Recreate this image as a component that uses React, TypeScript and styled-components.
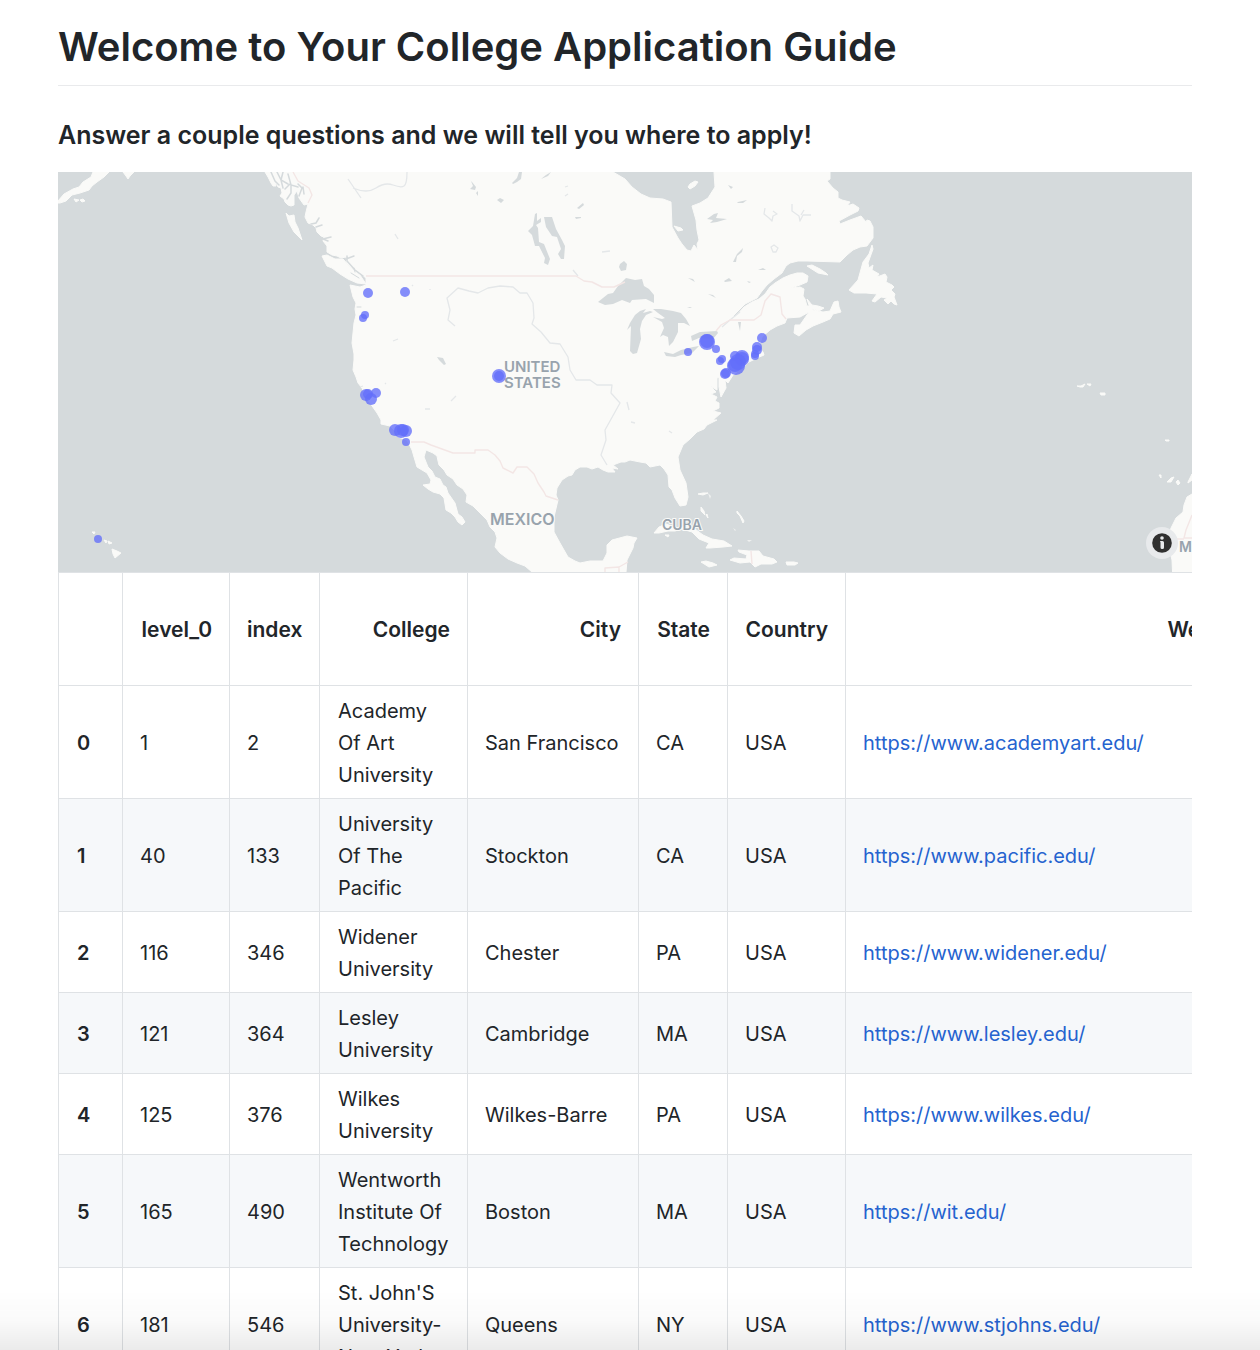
import React from "react";
import styled, { createGlobalStyle } from "styled-components";

const GlobalStyle = createGlobalStyle`
  *, *::before, *::after { box-sizing: border-box; }
  body {
    margin: 0;
    background: #fff;
    color: #212529;
    font-family: Inter, "Liberation Sans", sans-serif;
  }
`;

const Page = styled.div`
  height: 100vh;
  overflow-y: auto;
  scrollbar-width: none;
`;

const Content = styled.main`
  padding: 16px 68px 48px 58px;
`;

const Title = styled.h1`
  margin: 0;
  padding-bottom: 8px;
  border-bottom: 1px solid #e9eaec;
  font-size: 40px;
  font-weight: 600;
  line-height: 61px;
`;

const Subtitle = styled.h3`
  margin: 32px 0 20px;
  font-size: 25px;
  font-weight: 600;
  line-height: 34px;
`;

const MapFrame = styled.section`
  position: relative;
  height: 400px;
  overflow: hidden;
  background: #d5dadc;
`;

const MapDrawing = styled.svg`
  display: block;
  width: 100%;
  height: 100%;
`;

const InfoButton = styled.button`
  position: absolute;
  right: 14px;
  bottom: 13px;
  display: grid;
  place-items: center;
  width: 32px;
  height: 32px;
  padding: 0;
  border: 0;
  border-radius: 50%;
  background: #e8eaec;
`;

const TableScroll = styled.div`
  overflow-x: auto;
  scrollbar-width: none;
`;

const Table = styled.table`
  table-layout: fixed;
  width: 1209px;
  border-collapse: collapse;
  font-size: 20px;
  line-height: 32px;
`;

const Column = styled.col<{ $width: number }>`
  width: ${(p) => p.$width}px;
`;

const Row = styled.tr<{ $shaded?: boolean }>`
  background: ${(p) => (p.$shaded ? "#f6f8fa" : "#fff")};
`;

const HeadCell = styled.th`
  height: 113px;
  padding: 9px 17px 7px;
  border: 1px solid #dfe2e5;
  font-size: 21px;
  font-weight: 600;
  text-align: right;
  white-space: nowrap;
`;

const IndexCell = styled.th`
  padding: 9px 18px 7px;
  border: 1px solid #dfe2e5;
  font-weight: 600;
  text-align: left;
`;

const Cell = styled.td<{ $nowrap?: boolean }>`
  padding: 9px 0 7px 17px;
  border: 1px solid #dfe2e5;
  white-space: ${(p) => (p.$nowrap ? "nowrap" : "normal")};
`;

const CollegeCell = styled(Cell)`
  padding: 9px 12px 7px 18px;
`;

const SiteLink = styled.a`
  color: #2563cf;
  text-decoration: none;
`;

const BottomShade = styled.div`
  position: fixed;
  inset: auto 0 0 0;
  height: 60px;
  pointer-events: none;
  background: linear-gradient(rgba(0, 0, 0, 0), rgba(0, 0, 0, 0.02) 50%, rgba(0, 0, 0, 0.08));
`;

const land = "#fafaf8";
const water = "#d5dadc";

const MAINLAND =
  "M265 172L268 177L271 183L273 186L276 186L275 180L278 187L281 188L282 193L280 196L284 199L285 202L288 205L291 206L294 205L294 195L297 191L299 198L304 205L308 204L306 212L305 217L308 223L313 225L316 228L317 232L321 236L324 237L323 241L327 246L327 252L332 255L337 256L341 258L346 257L347 263L351 267L356 271L362 275L366 278L366 285L360 287L350 285L351 289L353 297L356 303L355 309L356 315L354 323L353 333L352 343L354 354L354 360L353 370L356 377L358 383L362 388L365 396L370 403L377 413L381 420L381 424L390 426L395 431L398 437L407 440L412 450L414 457L417 467L422 470L427 473L431 480L430 484L423 485L428 489L433 492L440 494L444 498L446 510L451 513L455 517L458 522L462 525L465 522L462 517L458 514L455 503L448 493L446 487L443 485L440 479L435 477L432 471L428 467L424 457L426 450L433 453L437 456L438 461L439 465L444 470L447 475L453 479L457 485L463 489L467 495L466 502L473 506L477 510L482 515L487 520L490 527L495 532L497 538L495 547L500 553L508 559L517 563L525 566L532 572L626 572L627 560L633 548L634 543L637 538L627 536L612 540L607 545L607 553L603 561L590 561L580 563L575 561L568 557L560 543L554 532L554 517L558 500L556 495L557 488L562 480L568 476L572 475L575 470L580 467L587 467L592 469L598 467L603 470L608 472L615 472L612 468L618 469L613 465L621 462L625 462L630 460L640 462L646 463L650 467L655 466L660 465L664 469L668 475L669 487L672 490L675 498L680 506L686 505L688 497L686 483L680 470L678 457L683 445L690 439L697 432L704 429L707 425L717 420L713 420L721 413L713 411L719 408L719 403L715 401L717 397L711 394L716 392L710 386L717 390L717 378L719 377L719 387L721 397L726 388L725 380L728 383L733 375L742 368L749 362L757 358L764 355L763 352L759 347L762 337L770 330L777 326L785 323L787 318L800 317L809 312L800 325L795 325L794 333L799 336L806 330L813 326L823 322L830 319L833 314L841 312L839 307L838 301L834 302L830 311L823 312L813 310L812 306L807 306L805 299L803 296L804 289L800 287L791 288L800 285L807 282L808 276L803 273L797 273L790 275L783 278L775 283L770 287L765 294L759 299L752 302L744 307L735 317L733 316L745 304L757 298L762 291L767 285L774 279L782 273L786 266L790 263L798 261L807 261L840 262L847 255L853 250L860 247L867 246L873 238L873 227L870 221L867 220L866 222L861 216L850 220L840 224L839 221L850 215L858 211L859 208L853 204L847 206L850 202L842 200L838 198L838 192L833 188L827 181L830 179L830 172L714 172L715 187L708 198L700 203L692 206L696 220L697 230L699 240L697 244L698 250L694 245L691 251L687 250L682 244L678 238L672 227L671 202L663 199L650 198L641 194L632 187L625 179L613 172Z";

const ISLANDS = [
  "M58 201L64 194L73 189L79 187L83 182L91 177L93 172L109 172L104 177L97 182L92 186L89 190L80 193L72 195L66 201L60 203L58 203Z",
  "M74 199l5 1-3 2zM80 200l3-1 2 2-3 1zM123 172l11 0-4 4-2 3-2-3z",
  "M286 213l3 3 5-1 1 7 3 6 4 12-8-8-5-9z",
  "M322 256l5-1 8 4 8 0 9 10 8 6 6 9-9-1-9-4-8-5-8-6-5-2z",
  "M872 245l1 4-5 14 1 5 4-3-1 5 7 4-2 3 8-3 2 3-1 5 6 3 2 2-3 3 4 4-1 3 3 8-3-1-3-3-3 3-4-4 3-2-6-1-6 5-3-1 5-7-11-1-12 0-5-3 9-10 5-18 6-8z",
  "M807 266l5-1 8 4 6 4 2 2-10-2zM807 299l5 6 6 1 6 2-5 3-9-3z",
  "M654 533l5-6 7-3 11 4 10-2 8 3 8 6 9 4 12 2 8 5-9 1-13 1-4 0 3-5-10-4-7-7-10-3-7 2-7 0-9 2z",
  "M665 535h4l-1 2zM737 511l4 5 3 5-1 2-3-7-3-3z",
  "M738 550l11 1 10 0 4 5 11 3 3 3-5 2-11 0-6 3-5-5-10 1-10-3 4-2 12 1 1-4-8-3z",
  "M701 562l5-1 7 2 4 2-8 2zM786 562h8l4 1-3 2-8 0z",
  "M698 494l5-1 5 0-5 2zM701 507l3 4 1 4-4-4zM707 514l1 4-2-3z",
  "M92 532l3 0-1 2zM104 540l3 1-1 2zM108 541l4 2-3 1zM112 549l5 2 4 2-6 5-2-4z",
  "M1077 386l4 0 4-2-2 3-3 0zM1087 384h4l-1 2zM1100 393h5v2h-4zM1165 440h4v1h-3z",
  "M1167 482l4-4 3-1-3 5zM1188 482l3-6 1-2v6l-4 3zM1159 475h2l0 3zM1176 482l2-2 2 3-2 2z",
  "M1192 494l-5 3-3 8-1 7-7 6-5 10-4 14 3 10 2 8 1 22h19z",
  "M690 184l5-3 3 1-3 4-5 3-2-2z",
  "M674 226l7 2 2 2-5 1z",
];

const LAKES = [
  "M598 302l10-8 5-1 5-7 8-8 9 2 7-1 2 7 5 3 5 6 0 8-8-4-14 1-2 3-8-3-9 4-8 1z",
  "M635 315l5-4 6-2-3 4 7-2 3 1-7 3-4 6-2 8 1 10-4 14-4 1-3-3 1-25-4 4 3-7z",
  "M653 309l8 0 12 2 8 2 5 6 4 7-6-3-6 0 0 9-5 10-4 4-1-9-5-2-3 2 4-9-2-6-9-5 9 2 3-1-7-5z",
  "M664 352l9 2 8-4 12-3 6-1-7 7-11 2-6 2-9-1z",
  "M691 336l9-4 17-1 1 2-5 6-14-1-7 3z",
  "M544 217l8 0 4 12 6 11 3 6-1 13-3 0-3-5 3-5-4-12-5-1-6-9z",
  "M535 214l2-1 0 8 4-3 0 4-5 3 2 3 1 14 5 2 6 15-2 6-4-2 1-5-6-12-4 0-3-11-4-4 5-5z",
  "M437 357l6 1 3 6-2 1-5-5zM497 200l3-2 4 2-3 3zM512 183l5-5 2-6 3 0-1 7-4 3-4 2zM469 179l3 3 4 5-1 3-5-1 3-3-2-5zM476 193l2-2 0 5z",
  "M541 179l5-4 5-3-3 4zM577 208l6-5 1 2-5 4zM575 217l6 0 0 1-5 1zM620 264l4-3 3 3-1 6-5 1-2-4z",
  "M707 219l7-5 4-1-2 5 11 1-10 3-7 1 3-3zM738 202l9-2-4 3-6 0zM733 262l4-8 6-6-1 4-5 4-1 6zM738 322l3 0-1 9z",
  "M758 270l5-2 3 2zM747 281l4 1-2 1zM724 281l5-3 3 3-7 1zM688 278l5 1 2 3zM708 294l5 1 3 3zM687 307l5 0-2 1zM728 185l5 2-2 2z",
];

const RIVERS = [
  "M407 172q0 12-3 14t-11-1-17 3-23 0M348 179l13 19M395 234l3 5",
  "M455 326L448 320L450 310L447 298L458 288L469 291L478 293L488 288L500 286L513 287L520 293L527 293L533 303L534 318L532 324L541 332L550 343L560 344L568 357L570 370L576 380L590 380L597 385L612 385L611 393L620 403L605 430L606 440L601 455L607 465",
  "M765 208l-1 6 5 4 3 3 1-5 4-2-4-3M792 204l0 7 7 5 1 5 3-6 8 0M801 215l3-5M771 247l3-2 4 3-2 4-3 0zM740 312l-10 8-8 7",
  "M627 402l2 8M631 422l4 1M669 431l3 2M425 409l5 0M451 401l5-5M565 187l3-1M602 252l8-1M565 196l3-2M573 270l5 6M360 387l3-1M385 384l1-1M398 339l-5 2M412 285l1 1M430 289v1",
];

const BORDERS = [
  "M366 276H576L584 281L592 282L602 287H614L625 282",
  "M411 442L424 442L431 445L453 453H475V450H488L495 455L500 461L503 468L513 473L517 467H527L534 474L538 483L544 492L546 496L558 500",
  "M716 331L721 325L730 320H754L761 315L765 301L771 294L780 297L782 314L786 319",
  "M293 172l5 9 11 7 3 7-4 8M605 572v-4l14-1 0 6M619 567l9-5M751 551l1 13",
  "M1192 515l-6 15-2 8h8M1175 539h9",
];

const SCHOOLS: [number, number, number][] = [
  [368, 293, 5], [405, 292, 5], [365, 315, 4], [363, 318, 4],
  [366, 395, 6], [368, 394, 5], [376, 393, 5], [371, 399, 6],
  [395, 430, 6], [401, 431, 7], [403, 430, 6], [406, 431, 6], [406, 442, 4],
  [499, 376, 7], [499, 376, 5], [688, 352, 4], [707, 342, 8], [707, 341, 7],
  [716, 349, 4], [720, 361, 4], [722, 359, 4], [762, 338, 5],
  [757, 347, 5], [757, 350, 5], [755, 356, 4], [755, 354, 4],
  [735, 356, 5], [742, 357, 7], [742, 359, 7], [736, 366, 9], [738, 362, 8],
  [735, 365, 7], [725, 374, 5], [726, 373, 5], [98, 539, 4],
];

const MAP_LABELS: { text: string; x: number; y: number; size: number }[] = [
  { text: "UNITED", x: 504, y: 372, size: 15 },
  { text: "STATES", x: 504, y: 388, size: 15 },
  { text: "MEXICO", x: 490, y: 525, size: 16 },
  { text: "CUBA", x: 662, y: 530, size: 14 },
  { text: "MOROCCO", x: 1179, y: 552, size: 14 },
];

function CollegeMap() {
  return (
    <MapFrame aria-label="College locations">
      <MapDrawing viewBox="58 172 1134 400" preserveAspectRatio="xMidYMid slice" role="img" aria-label="Map of North America">
        <g fill={land} stroke={land} strokeWidth="1" strokeLinejoin="round">
          <path d={MAINLAND} />
          {ISLANDS.map((d) => <path key={d} d={d} />)}
        </g>
        <g fill="none" stroke={water} strokeLinecap="round">
          <path strokeWidth="1.5" d="M271 172l4 9 4 4M277 172l4 8 2 8M283 172l-2 8 7 4M288 174l3 11 7 2M285 189l5-5M291 185l0 8-4 6M298 184l4 4-3 8M303 187l1 7M319 218l-3 5-5 1M322 225l-6 2M331 237l-8 2 5 2M347 256l0 5 8 9 8 6M354 256l-8 3" />
          <path strokeWidth="1" d="M357 307l4 0M351 273l8 5M354 268l1 4" />
        </g>
        <g fill={water}>
          {LAKES.map((d) => <path key={d} d={d} />)}
        </g>
        <g fill="none" stroke="#e4e7e9" strokeWidth="1.3" strokeLinejoin="round">
          {RIVERS.map((d) => <path key={d} d={d} />)}
        </g>
        <g fill="none" stroke="#f3e6e5" strokeWidth="1.4" strokeLinejoin="round">
          {BORDERS.map((d) => <path key={d} d={d} />)}
        </g>
        <g fill={land} opacity="0.7">
          <path d="M708 493l3 3-1 3zM714 505l3 2zM720 512l4 3zM733 528l3 2-1 1zM747 540l5 0-3 2zM748 533l4 1zM114 182l2 1zM399 473l2 1z" />
        </g>
        <g fill="#98a3ad" stroke={land} strokeWidth="2" paintOrder="stroke" fontFamily='Inter, "Liberation Sans", sans-serif' fontWeight="600">
          {MAP_LABELS.map((l) => <text key={l.text} x={l.x} y={l.y} fontSize={l.size}>{l.text}</text>)}
        </g>
        <g fill="#636efa" fillOpacity="0.78">
          {SCHOOLS.map(([x, y, r], i) => <circle key={i} cx={x} cy={y} r={r} />)}
        </g>
      </MapDrawing>
      <InfoButton type="button" aria-label="Map attribution">
        <svg width="20" height="20" viewBox="0 0 20 20" aria-hidden="true">
          <circle cx="10" cy="10" r="9.8" fill="#303030" />
          <circle cx="10" cy="5" r="1.8" fill="#e8eaec" />
          <path d="M8 8h2.500q1.500 0 1.500 1.500v5q0 1.500-1.500 1.500h-.5q-1.500 0-1.500-1.500V9.500z" fill="#e8eaec" />
        </svg>
      </InfoButton>
    </MapFrame>
  );
}

const COLUMNS = [
  { label: "", width: 64 },
  { label: "level_0", width: 107 },
  { label: "index", width: 90 },
  { label: "College", width: 148 },
  { label: "City", width: 171 },
  { label: "State", width: 89 },
  { label: "Country", width: 118 },
  { label: "Website", width: 422 },
];

const COLLEGES = [
  { level: 1, index: 2, name: "Academy Of Art University", city: "San Francisco", state: "CA", url: "https://www.academyart.edu/" },
  { level: 40, index: 133, name: "University Of The Pacific", city: "Stockton", state: "CA", url: "https://www.pacific.edu/" },
  { level: 116, index: 346, name: "Widener University", city: "Chester", state: "PA", url: "https://www.widener.edu/" },
  { level: 121, index: 364, name: "Lesley University", city: "Cambridge", state: "MA", url: "https://www.lesley.edu/" },
  { level: 125, index: 376, name: "Wilkes University", city: "Wilkes-Barre", state: "PA", url: "https://www.wilkes.edu/" },
  { level: 165, index: 490, name: "Wentworth Institute Of Technology", city: "Boston", state: "MA", url: "https://wit.edu/" },
  { level: 181, index: 546, name: "St. John'S University-New York", city: "Queens", state: "NY", url: "https://www.stjohns.edu/" },
];

export default function App() {
  return (
    <Page>
      <GlobalStyle />
      <Content>
        <Title>Welcome to Your College Application Guide</Title>
        <Subtitle>Answer a couple questions and we will tell you where to apply!</Subtitle>
        <CollegeMap />
        <TableScroll>
          <Table>
            <colgroup>
              {COLUMNS.map((c) => <Column key={c.label} $width={c.width} />)}
            </colgroup>
            <thead>
              <Row>
                {COLUMNS.map((c) => <HeadCell key={c.label} scope="col">{c.label}</HeadCell>)}
              </Row>
            </thead>
            <tbody>
              {COLLEGES.map((c, i) => (
                <Row key={c.url} $shaded={i % 2 === 1}>
                  <IndexCell scope="row">{i}</IndexCell>
                  <Cell>{c.level}</Cell>
                  <Cell>{c.index}</Cell>
                  <CollegeCell>{c.name}</CollegeCell>
                  <Cell $nowrap>{c.city}</Cell>
                  <Cell>{c.state}</Cell>
                  <Cell>USA</Cell>
                  <Cell $nowrap><SiteLink href={c.url}>{c.url}</SiteLink></Cell>
                </Row>
              ))}
            </tbody>
          </Table>
        </TableScroll>
      </Content>
      <BottomShade />
    </Page>
  );
}
